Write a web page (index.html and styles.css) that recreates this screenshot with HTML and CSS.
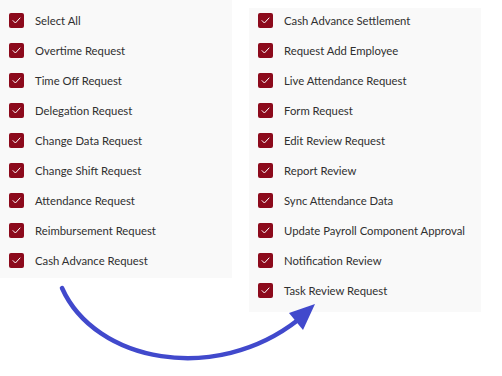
FILE: index.html
```html
<!DOCTYPE html>
<html>
<head>
<meta charset="utf-8">
<link rel="stylesheet" href="styles.css">
</head>
<body>
<div class="stage">
  <ul class="panel panel-left">
    <li class="row"><span class="box"><svg viewBox="0 0 15 15"><path d="M4 7.6 L6.4 10 L11 5" /></svg></span>Select All</li>
    <li class="row"><span class="box"><svg viewBox="0 0 15 15"><path d="M4 7.6 L6.4 10 L11 5" /></svg></span>Overtime Request</li>
    <li class="row"><span class="box"><svg viewBox="0 0 15 15"><path d="M4 7.6 L6.4 10 L11 5" /></svg></span>Time Off Request</li>
    <li class="row"><span class="box"><svg viewBox="0 0 15 15"><path d="M4 7.6 L6.4 10 L11 5" /></svg></span>Delegation Request</li>
    <li class="row"><span class="box"><svg viewBox="0 0 15 15"><path d="M4 7.6 L6.4 10 L11 5" /></svg></span>Change Data Request</li>
    <li class="row"><span class="box"><svg viewBox="0 0 15 15"><path d="M4 7.6 L6.4 10 L11 5" /></svg></span>Change Shift Request</li>
    <li class="row"><span class="box"><svg viewBox="0 0 15 15"><path d="M4 7.6 L6.4 10 L11 5" /></svg></span>Attendance Request</li>
    <li class="row"><span class="box"><svg viewBox="0 0 15 15"><path d="M4 7.6 L6.4 10 L11 5" /></svg></span>Reimbursement Request</li>
    <li class="row"><span class="box"><svg viewBox="0 0 15 15"><path d="M4 7.6 L6.4 10 L11 5" /></svg></span>Cash Advance Request</li>
  </ul>
  <ul class="panel panel-right">
    <li class="row"><span class="box"><svg viewBox="0 0 15 15"><path d="M4 7.6 L6.4 10 L11 5" /></svg></span>Cash Advance Settlement</li>
    <li class="row"><span class="box"><svg viewBox="0 0 15 15"><path d="M4 7.6 L6.4 10 L11 5" /></svg></span>Request Add Employee</li>
    <li class="row"><span class="box"><svg viewBox="0 0 15 15"><path d="M4 7.6 L6.4 10 L11 5" /></svg></span>Live Attendance Request</li>
    <li class="row"><span class="box"><svg viewBox="0 0 15 15"><path d="M4 7.6 L6.4 10 L11 5" /></svg></span>Form Request</li>
    <li class="row"><span class="box"><svg viewBox="0 0 15 15"><path d="M4 7.6 L6.4 10 L11 5" /></svg></span>Edit Review Request</li>
    <li class="row"><span class="box"><svg viewBox="0 0 15 15"><path d="M4 7.6 L6.4 10 L11 5" /></svg></span>Report Review</li>
    <li class="row"><span class="box"><svg viewBox="0 0 15 15"><path d="M4 7.6 L6.4 10 L11 5" /></svg></span>Sync Attendance Data</li>
    <li class="row"><span class="box"><svg viewBox="0 0 15 15"><path d="M4 7.6 L6.4 10 L11 5" /></svg></span>Update Payroll Component Approval</li>
    <li class="row"><span class="box"><svg viewBox="0 0 15 15"><path d="M4 7.6 L6.4 10 L11 5" /></svg></span>Notification Review</li>
    <li class="row"><span class="box"><svg viewBox="0 0 15 15"><path d="M4 7.6 L6.4 10 L11 5" /></svg></span>Task Review Request</li>
  </ul>
  <svg class="arrow" width="502" height="376" viewBox="0 0 502 376">
    <path class="arrow-line" d="M62 288 C 95 362, 215 385, 298 320" />
    <polygon class="arrow-head" points="315,304 289,313 303,330" />
  </svg>
</div>
</body>
</html>
```

FILE: styles.css
```css
html, body {
  margin: 0;
  padding: 0;
  background: #ffffff;
}

body {
  font-family: Lato, "Open Sans", sans-serif;
  font-size: 11.3px;
  color: #303030;
}

.stage {
  position: relative;
  display: flex;
  align-items: flex-start;
  width: 502px;
  height: 376px;
}

.panel {
  list-style: none;
  margin: 0;
  background: #f9f9f9;
  width: 232px;
  box-sizing: border-box;
  display: flex;
  flex-direction: column;
  gap: 10px;
  padding-left: 9px;
}

.panel-left {
  padding-top: 10px;
  padding-bottom: 8px;
}

.panel-right {
  margin-left: 17px;
  margin-top: 8px;
  padding-top: 2px;
  padding-bottom: 12px;
}

.row {
  display: flex;
  align-items: center;
  height: 20px;
  gap: 11px;
  white-space: nowrap;
}

.box {
  width: 15px;
  height: 15px;
  flex: none;
  background: #8c0a1c;
  border-radius: 2px;
  display: flex;
}

.box svg {
  width: 15px;
  height: 15px;
}

.box path {
  fill: none;
  stroke: #ffffff;
  stroke-width: 1;
  stroke-linecap: round;
  stroke-linejoin: round;
}

.arrow {
  position: absolute;
  left: 0;
  top: 0;
  pointer-events: none;
}

.arrow-line {
  fill: none;
  stroke: #4149cc;
  stroke-width: 4.5;
  stroke-linecap: round;
}

.arrow-head {
  fill: #4149cc;
}
```
